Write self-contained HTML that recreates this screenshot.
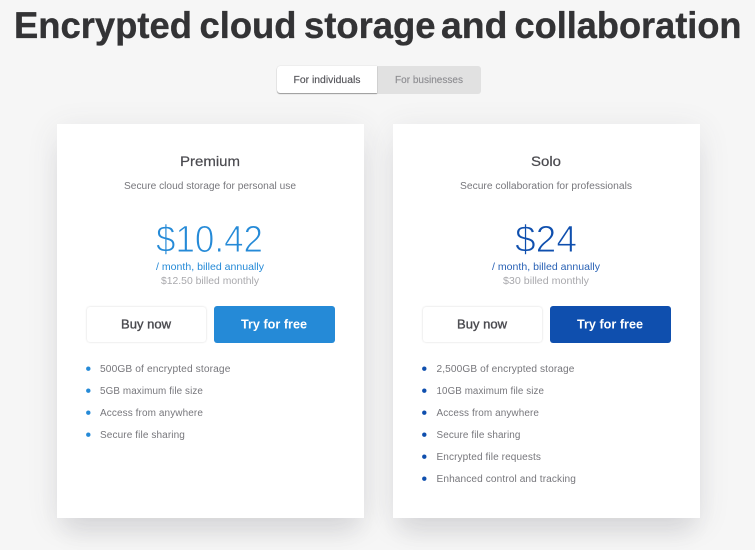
<!DOCTYPE html>
<html lang="en">
<head>
<meta charset="utf-8">
<title>Encrypted cloud storage and collaboration</title>
<style>
html,body{margin:0;padding:0;background:#f6f6f6;width:755px;height:550px;overflow:hidden}
#w{position:absolute;left:0;top:0;width:755px;height:550px;filter:blur(.35px)}
.card{position:absolute;top:124px;width:307px;height:394px;background:#fff;box-shadow:0 22px 24px -8px rgba(60,60,75,.11),0 6px 30px rgba(70,70,95,.11)}
.tog{position:absolute;left:277px;top:66px;width:204px;height:28px;background:#e1e1e1;border-radius:3px}
.act{position:absolute;left:0;top:0;width:100px;height:27px;background:#fff;border-radius:3px 0 0 3px;box-shadow:0 1px 1px rgba(0,0,0,.3),0 0 1px rgba(0,0,0,.2)}
.btn{position:absolute;top:307px;width:119px;height:35px;border-radius:3px;background:#fff;box-shadow:0 0 2px rgba(0,0,0,.16)}
.pri{top:306px;width:121px;height:37px;box-shadow:none}
svg{position:absolute;left:0;top:0}
text{font-family:"Liberation Sans",sans-serif}
.l{font-size:10px;fill:#77777c;letter-spacing:.1px}
.d1{fill:#258ad7}.d2{fill:#0f4fae}
.h{font-size:37px;font-weight:700;fill:#333335;stroke:#333335;stroke-width:.35px}
</style>
</head>
<body>
<div id="w">
<div class="card" style="left:57px"></div>
<div class="card" style="left:393px"></div>
<div class="tog"><div class="act"></div></div>
<div class="btn" style="left:87px"></div>
<div class="btn pri" style="left:214px;background:#258ad7"></div>
<div class="btn" style="left:423px"></div>
<div class="btn pri" style="left:550px;background:#0f4fae"></div>
<svg width="755" height="550" viewBox="0 0 755 550">
<text class="h" x="14" y="38" textLength="178" lengthAdjust="spacingAndGlyphs">Encrypted</text>
<text class="h" x="199.500" y="38" textLength="97" lengthAdjust="spacingAndGlyphs">cloud</text>
<text class="h" x="304" y="38" textLength="131.500" lengthAdjust="spacingAndGlyphs">storage</text>
<text class="h" x="441" y="38" textLength="66.500" lengthAdjust="spacingAndGlyphs">and</text>
<text class="h" x="514.500" y="38" textLength="227" lengthAdjust="spacingAndGlyphs">collaboration</text>
<text x="293.500" y="83" font-size="10" fill="#55555a" textLength="67" lengthAdjust="spacingAndGlyphs" stroke="#55555a" stroke-width=".15">For individuals</text>
<text x="395" y="83" font-size="10" fill="#8e8e92" textLength="68" lengthAdjust="spacingAndGlyphs" stroke="#8e8e92" stroke-width=".15">For businesses</text>

<text x="180" y="166" font-size="14" fill="#4a4a4f" textLength="60" lengthAdjust="spacingAndGlyphs" stroke="#4a4a4f" stroke-width=".2">Premium</text>
<text x="124" y="189" font-size="10" fill="#77777c" textLength="172" lengthAdjust="spacingAndGlyphs">Secure cloud storage for personal use</text>
<text x="156" y="252" font-size="38" fill="#258ad7" stroke="#fff" stroke-width="1" textLength="107" lengthAdjust="spacingAndGlyphs">$10.42</text>
<text x="156" y="270" font-size="10.500" fill="#258ad7" textLength="108" lengthAdjust="spacingAndGlyphs">/ month, billed annually</text>
<text x="161" y="284" font-size="10.500" fill="#a9a9ad" textLength="98" lengthAdjust="spacingAndGlyphs">$12.50 billed monthly</text>
<text x="121" y="328.500" font-size="12.500" fill="#4a4a4f" stroke="#4a4a4f" stroke-width=".35" textLength="50" lengthAdjust="spacingAndGlyphs">Buy now</text>
<text x="241" y="328.500" font-size="12.500" fill="#fff" font-weight="700" textLength="66" lengthAdjust="spacingAndGlyphs">Try for free</text>
<circle class="d1" cx="88.300" cy="368.700" r="2.200"/><text class="l" x="100" y="372" textLength="130.500" lengthAdjust="spacingAndGlyphs">500GB of encrypted storage</text>
<circle class="d1" cx="88.300" cy="390.700" r="2.200"/><text class="l" x="100" y="394" textLength="103" lengthAdjust="spacingAndGlyphs">5GB maximum file size</text>
<circle class="d1" cx="88.300" cy="412.700" r="2.200"/><text class="l" x="100" y="416" textLength="103" lengthAdjust="spacingAndGlyphs">Access from anywhere</text>
<circle class="d1" cx="88.300" cy="434.700" r="2.200"/><text class="l" x="100" y="438" textLength="85" lengthAdjust="spacingAndGlyphs">Secure file sharing</text>

<text x="531" y="166" font-size="14" fill="#4a4a4f" textLength="30" lengthAdjust="spacingAndGlyphs" stroke="#4a4a4f" stroke-width=".2">Solo</text>
<text x="460" y="189" font-size="10" fill="#77777c" textLength="172" lengthAdjust="spacingAndGlyphs">Secure collaboration for professionals</text>
<text x="515" y="252" font-size="38" fill="#0f4fae" stroke="#fff" stroke-width="1" textLength="62" lengthAdjust="spacingAndGlyphs">$24</text>
<text x="492" y="270" font-size="10.500" fill="#2a62b5" textLength="108" lengthAdjust="spacingAndGlyphs">/ month, billed annually</text>
<text x="503" y="284" font-size="10.500" fill="#a9a9ad" textLength="86" lengthAdjust="spacingAndGlyphs">$30 billed monthly</text>
<text x="457" y="328.500" font-size="12.500" fill="#4a4a4f" stroke="#4a4a4f" stroke-width=".35" textLength="50" lengthAdjust="spacingAndGlyphs">Buy now</text>
<text x="577" y="328.500" font-size="12.500" fill="#fff" font-weight="700" textLength="66" lengthAdjust="spacingAndGlyphs">Try for free</text>
<circle class="d2" cx="424.300" cy="368.700" r="2.200"/><text class="l" x="436.500" y="372" textLength="138" lengthAdjust="spacingAndGlyphs">2,500GB of encrypted storage</text>
<circle class="d2" cx="424.300" cy="390.700" r="2.200"/><text class="l" x="436.500" y="394" textLength="107.500" lengthAdjust="spacingAndGlyphs">10GB maximum file size</text>
<circle class="d2" cx="424.300" cy="412.700" r="2.200"/><text class="l" x="436.500" y="416" textLength="102.500" lengthAdjust="spacingAndGlyphs">Access from anywhere</text>
<circle class="d2" cx="424.300" cy="434.700" r="2.200"/><text class="l" x="436.500" y="438" textLength="84" lengthAdjust="spacingAndGlyphs">Secure file sharing</text>
<circle class="d2" cx="424.300" cy="456.700" r="2.200"/><text class="l" x="436.500" y="460" textLength="104.500" lengthAdjust="spacingAndGlyphs">Encrypted file requests</text>
<circle class="d2" cx="424.300" cy="478.700" r="2.200"/><text class="l" x="436.500" y="482" textLength="139.500" lengthAdjust="spacingAndGlyphs">Enhanced control and tracking</text>
</svg>
</div>
</body>
</html>
